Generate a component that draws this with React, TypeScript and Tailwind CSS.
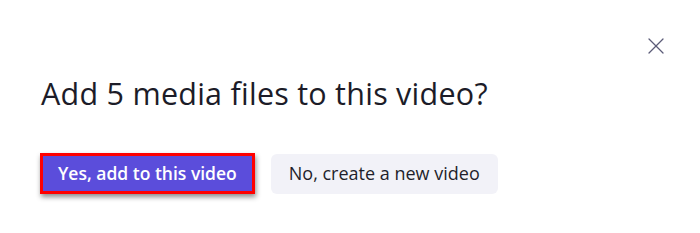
import { X } from 'lucide-react';

const App = () => {
    return (
        <div className="relative w-[700px] h-[233px] bg-white font-['Open_Sans',sans-serif]">
            <button className="absolute left-[642px] top-[32px] text-[#5c5c78]">
                <X size={28} strokeWidth={1.1} />
            </button>
            <div className="flex flex-col pl-[41px] pt-[74px]">
                <h2 className="text-[30.5px] leading-[38px] font-medium text-[#1c1c28] tracking-[0.25px]">
                    Add 5 media files to this video?
                </h2>
                <div className="flex items-center gap-[16px] mt-[41px]">
                    <div className="-ml-[1px] border-[3px] border-[#ff0000] shadow-[1px_3px_5px_rgba(0,0,0,0.45)]">
                        <button className="h-[35px] px-[15px] bg-[#5b4ddb] text-white text-[17.5px] font-semibold">
                            Yes, add to this video
                        </button>
                    </div>
                    <button className="h-[40px] px-[18px] rounded-md bg-[#f2f2f8] text-[#1f1f2b] text-[18px]">
                        No, create a new video
                    </button>
                </div>
            </div>
        </div>
    );
};

export default App;
